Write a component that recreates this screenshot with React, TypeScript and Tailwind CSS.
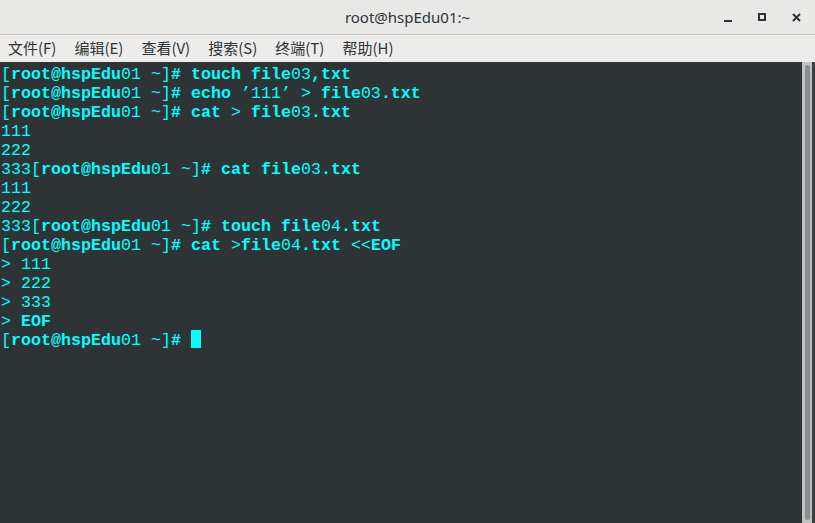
import React from "react";

const lines: string[] = [
  "[root@hspEdu01 ~]# touch file03,txt",
  "[root@hspEdu01 ~]# echo \u2019111\u2019 > file03.txt",
  "[root@hspEdu01 ~]# cat > file03.txt",
  "111",
  "222",
  "333[root@hspEdu01 ~]# cat file03.txt",
  "111",
  "222",
  "333[root@hspEdu01 ~]# touch file04.txt",
  "[root@hspEdu01 ~]# cat >file04.txt <<EOF",
  "> 111",
  "> 222",
  "> 333",
  "> EOF",
];

function Line({ text }: { text: string }) {
  const segs: { t: string; b: boolean }[] = [];
  for (const ch of text) {
    const b = /[a-zA-Z#@.,]/.test(ch);
    const last = segs[segs.length - 1];
    if (last && last.b === b) last.t += ch;
    else segs.push({ t: ch, b });
  }
  return (
    <div className="h-[19px] leading-[19px] whitespace-pre">
      <span className="relative top-[1px]">
        {segs.map((s, i) => (
          <span key={i} className={s.b ? "font-bold" : "font-normal"}>
            {s.t}
          </span>
        ))}
      </span>
    </div>
  );
}

export default function App() {
  const menus = ["文件(F)", "编辑(E)", "查看(V)", "搜索(S)", "终端(T)", "帮助(H)"];
  return (
    <div className="w-[815px] h-[523px] flex flex-col overflow-hidden bg-[#2e3436]">
      <div className="relative h-[35px] bg-[#e8e8e7] border-b border-[#c4c3bf] flex items-center justify-center shrink-0">
        <span
          className="text-[15px] text-[#2e3436]"
          style={{ fontFamily: '"Noto Sans", "Open Sans", sans-serif' }}
        >
          root@hspEdu01:~
        </span>
        <div className="absolute right-[14px] top-0 h-full flex items-center gap-[26px]">
          <div className="w-[8px] h-[8px] flex items-end">
            <div className="w-[8px] h-[2px] bg-[#2e3436] translate-y-[1px]" />
          </div>
          <div className="w-[8px] h-[8px] border-2 border-[#2e3436]" />
          <svg width="9" height="9" viewBox="0 0 9 9">
            <path d="M1 1 L8 8 M8 1 L1 8" stroke="#2e3436" strokeWidth="2" />
          </svg>
        </div>
      </div>
      <div
        className="h-[27px] bg-[#edeceb] flex items-center pl-[8px] gap-[18px] text-[15px] text-[#2e3436] shrink-0"
        style={{ fontFamily: '"Noto Sans CJK SC", "Noto Sans", sans-serif' }}
      >
        {menus.map((m) => (
          <span key={m}>{m}</span>
        ))}
      </div>
      <div className="flex-1 flex min-h-0">
        <div
          className="flex-1 pt-[2px] pl-[1px] text-[#00ffff] text-[16.67px]"
          style={{ fontFamily: '"Liberation Mono", "DejaVu Sans Mono", monospace' }}
        >
          {lines.map((l, i) => (
            <Line key={i} text={l} />
          ))}
          <div className="h-[19px] leading-[19px] whitespace-pre flex items-start">
            <Line text="[root@hspEdu01 ~]# " />
            <div className="w-[10px] h-[18px] bg-[#00ffff]" />
          </div>
        </div>
        <div className="w-[13px] flex">
          <div className="w-[10px] bg-[#c2c2c2] py-[3px] flex justify-center">
            <div className="w-[5px] h-full bg-[#8b8e8f] rounded-[3px]" />
          </div>
          <div className="w-[3px] bg-[#3a3f41]" />
        </div>
      </div>
    </div>
  );
}
